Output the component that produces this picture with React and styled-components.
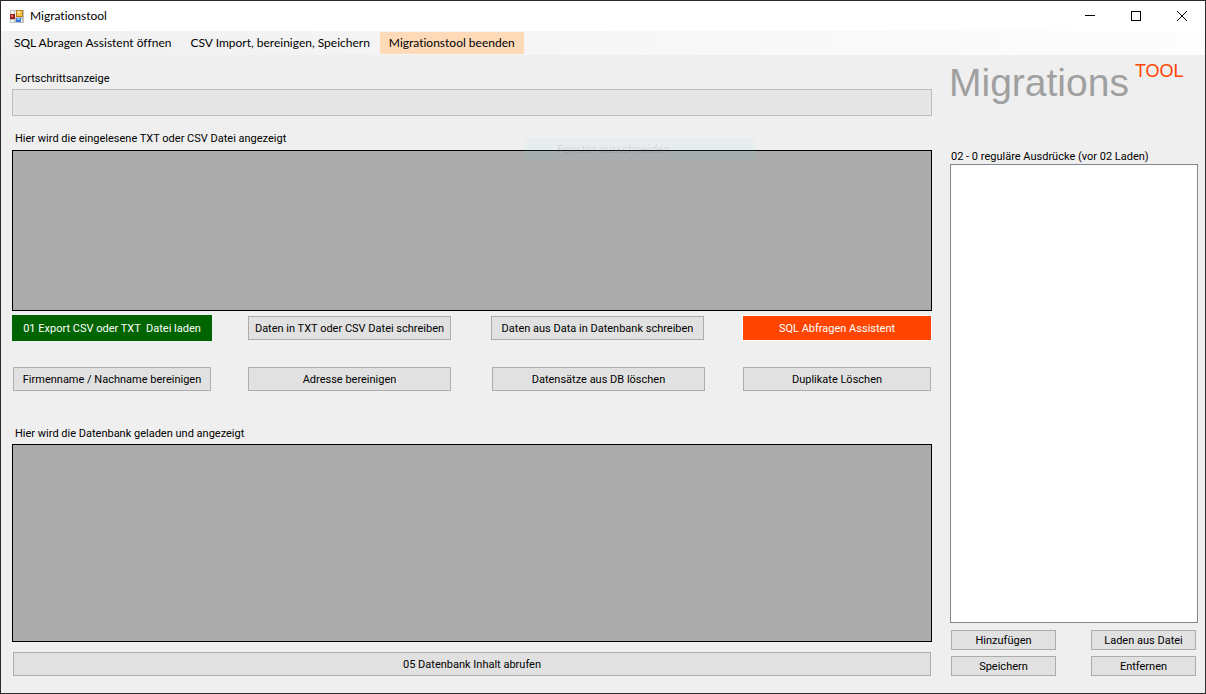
import React from "react";
import styled, { createGlobalStyle } from "styled-components";

const GlobalStyle = createGlobalStyle`
  *, *::before, *::after { box-sizing: border-box; }
  body { margin: 0; background: #efefef; font-variant-ligatures: none; }
  button { font-variant-ligatures: none; }
`;

const Window = styled.div`
  display: flex;
  flex-direction: column;
  min-height: 100vh;
  border: 1px solid #2b2a2b;
  background: #efefef;
  color: #000;
  font-family: Roboto, "Liberation Sans", sans-serif;
  font-size: 11px;
  line-height: 16px;
`;

const TitleBar = styled.header`
  display: flex;
  align-items: center;
  height: 30px;
  padding-left: 8px;
  background: #fff;
`;

const WindowTitle = styled.h1`
  flex: 1;
  margin: 0 0 0 6px;
  font-family: Lato, "Segoe UI", sans-serif;
  font-size: 12px;
  font-weight: 400;
`;

const CaptionButton = styled.button`
  display: flex;
  align-items: center;
  justify-content: center;
  width: 46px;
  height: 30px;
  padding: 0;
  border: 0;
  background: transparent;
`;

const MenuBar = styled.nav`
  display: flex;
  align-items: center;
  gap: 1px;
  height: 24px;
  padding-left: 4px;
  background: linear-gradient(90deg, #f0f0f0, #fdfdfd);
`;

const MenuItem = styled.button`
  height: 22px;
  padding: 0 9px;
  border: 0;
  background: ${(p) => (p.$highlight ? "#ffdab9" : "transparent")};
  color: #000;
  font-family: Lato, "Segoe UI", sans-serif;
  font-size: 12px;
  line-height: 16px;
  white-space: nowrap;
`;

const Content = styled.main`
  display: flex;
  flex: 1;
  gap: 18px;
  padding: 0 7px 17px 11px;
`;

const DataColumn = styled.section`
  display: flex;
  flex: 1;
  flex-direction: column;
  min-width: 0;
`;

const Caption = styled.label`
  display: block;
  padding-left: 3px;
  margin: ${(p) => p.$margin};
  white-space: nowrap;
`;

const ProgressTrack = styled.div`
  height: 27px;
  border: 1px solid #bcbcbc;
  background: #e6e6e6;
`;

const DataGrid = styled.div`
  position: relative;
  flex: ${(p) => (p.$grow ? "1 0 198px" : "0 0 161px")};
  border: 1px solid #000;
  background: #ababab;
`;

const FadingMenu = styled.div`
  position: absolute;
  top: -13px;
  left: 512px;
  width: 230px;
  height: 22px;
  padding-left: 32px;
  background: rgba(145, 201, 247, 0.08);
  color: rgba(80, 20, 20, 0.12);
  font-family: Lato, "Segoe UI", sans-serif;
  font-size: 12px;
  line-height: 22px;
`;

const ActionGrid = styled.div`
  display: grid;
  grid-template-columns: 236fr 243fr 252fr 189fr;
  row-gap: 26px;
  align-items: center;
  margin-top: 4px;
`;

const tones = {
  plain: { background: "#e1e1e1", border: "#adadad", color: "#000" },
  green: { background: "#006400", border: "#006400", color: "#fff" },
  orange: { background: "#ff4500", border: "#fff", color: "#fff" },
};

const Button = styled.button`
  height: ${(p) => p.$height || 24}px;
  margin: ${(p) => p.$margin || "0"};
  padding: 2px 0 0;
  border: 1px solid ${(p) => tones[p.$tone || "plain"].border};
  background: ${(p) => tones[p.$tone || "plain"].background};
  color: ${(p) => tones[p.$tone || "plain"].color};
  font-family: inherit;
  font-size: 11px;
  line-height: 16px;
  white-space: pre;
`;

const SideColumn = styled.aside`
  display: flex;
  flex-direction: column;
  flex: 0 0 248px;
`;

const Brand = styled.div`
  display: flex;
  align-items: flex-start;
  margin-left: -1px;
  padding-top: 6px;
  color: #a0a0a0;
  font-family: "Liberation Sans", Arial, sans-serif;
  font-size: 39px;
  line-height: 44px;
`;

const BrandMark = styled.span`
  margin-left: 6px;
  color: #ff4500;
  font-size: 18px;
  line-height: 20px;
`;

const ExpressionList = styled.textarea`
  flex: 1;
  width: 100%;
  min-height: 120px;
  padding: 2px;
  border: 1px solid #828790;
  border-radius: 0;
  background: #fff;
  font: inherit;
  resize: none;
`;

const SideButtons = styled.div`
  display: grid;
  grid-template-columns: 105px 105px;
  justify-content: space-between;
  row-gap: 6px;
  padding: 7px 2px 0 1px;
`;

function AppIcon() {
  return (
    <svg width="15" height="15" viewBox="0 0 15 15" aria-hidden="true" shapeRendering="crispEdges">
      <rect x="1" y="1" width="14" height="13" fill="#c2c2c2" />
      <path d="M2 2h3v3H2zM2 11h3v2H2zM7 10h6v3H7zM6 2h1v6H6z" fill="#f6f6f6" />
      <rect x="7" y="1" width="7" height="7" fill="#b8801c" />
      <rect x="8" y="2" width="5" height="5" fill="#f7c648" />
      <rect x="8" y="2" width="3" height="2" fill="#ffe9a4" />
      <rect x="1" y="5" width="5" height="5" fill="#a01e18" />
      <rect x="2" y="6" width="2" height="2" fill="#dd7a6c" />
      <rect x="7" y="9" width="5" height="4" fill="#3a77dc" />
      <rect x="8" y="9" width="3" height="2" fill="#86b4f6" />
    </svg>
  );
}

export default function App() {
  return (
    <>
      <GlobalStyle />
      <Window>
        <TitleBar>
          <AppIcon />
          <WindowTitle>Migrationstool</WindowTitle>
          <CaptionButton aria-label="Minimieren">
            <svg width="10" height="10" shapeRendering="crispEdges"><path d="M0 4.500h10" stroke="#000" /></svg>
          </CaptionButton>
          <CaptionButton aria-label="Maximieren">
            <svg width="10" height="10" shapeRendering="crispEdges"><path d="M.5 .5h9v9h-9z" fill="none" stroke="#000" /></svg>
          </CaptionButton>
          <CaptionButton aria-label="Schließen">
            <svg width="10" height="10"><path d="M0 0l10 10M10 0L0 10" stroke="#000" /></svg>
          </CaptionButton>
        </TitleBar>
        <MenuBar>
          <MenuItem>SQL Abragen Assistent öffnen</MenuItem>
          <MenuItem>CSV Import, bereinigen, Speichern</MenuItem>
          <MenuItem $highlight>Migrationstool beenden</MenuItem>
        </MenuBar>
        <Content>
          <DataColumn>
            <Caption as="span" id="progress-label" $margin="16px 0 2px">Fortschrittsanzeige</Caption>
            <ProgressTrack role="progressbar" aria-labelledby="progress-label" aria-valuenow={0} />
            <Caption as="span" $margin="15px 0 3px">Hier wird die eingelesene TXT oder CSV Datei angezeigt</Caption>
            <DataGrid>
              <FadingMenu>Fenster ausschneiden</FadingMenu>
            </DataGrid>
            <ActionGrid>
              <Button $tone="green" $height={26} $margin="0 36px 0 0">{"01 Export CSV oder TXT  Datei laden"}</Button>
              <Button $margin="0 40px 0 0">Daten in TXT oder CSV Datei schreiben</Button>
              <Button $margin="0 39px 0 0">Daten aus Data in Datenbank schreiben</Button>
              <Button $tone="orange" $height={26} $margin="0 0 0 -1px">SQL Abfragen Assistent</Button>
              <Button $margin="0 37px 0 1px">Firmenname / Nachname bereinigen</Button>
              <Button $margin="0 40px 0 0">Adresse bereinigen</Button>
              <Button $margin="0 38px 0 1px">Datensätze aus DB löschen</Button>
              <Button $margin="0 1px 0 0">Duplikate Löschen</Button>
            </ActionGrid>
            <Caption as="span" $margin="35px 0 2px">Hier wird die Datenbank geladen und angezeigt</Caption>
            <DataGrid $grow />
            <Button $margin="10px 1px 0">05 Datenbank Inhalt abrufen</Button>
          </DataColumn>
          <SideColumn>
            <Brand>
              Migrations<BrandMark>TOOL</BrandMark>
            </Brand>
            <Caption htmlFor="expressions" $margin="44px 0 -1px -2px">02 - 0 reguläre Ausdrücke (vor 02 Laden)</Caption>
            <ExpressionList id="expressions" />
            <SideButtons>
              <Button $height={20}>Hinzufügen</Button>
              <Button $height={20}>Laden aus Datei</Button>
              <Button $height={20}>Speichern</Button>
              <Button $height={20}>Entfernen</Button>
            </SideButtons>
          </SideColumn>
        </Content>
      </Window>
    </>
  );
}
